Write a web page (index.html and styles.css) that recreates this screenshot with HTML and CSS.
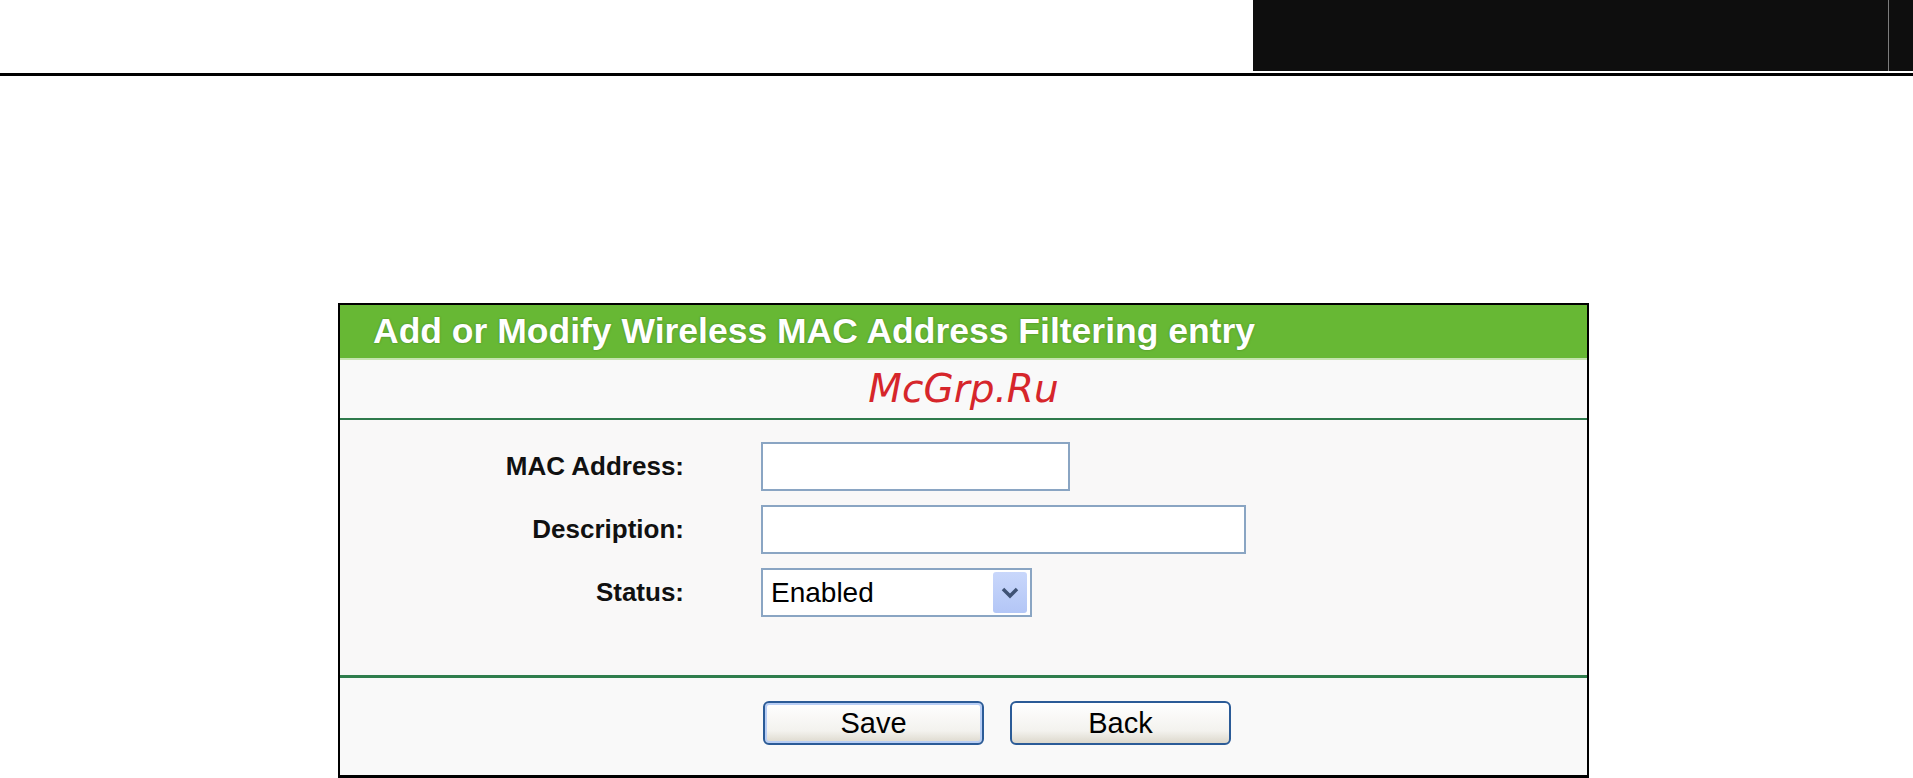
FILE: index.html
```html
<!DOCTYPE html>
<html lang="en">
<head>
  <meta charset="UTF-8" />
  <title>Wireless MAC Filtering</title>
  <link rel="stylesheet" href="styles.css">
</head>
<body>
  <div class="topbar">
    <div class="blackbox"><div class="blackbox-inner"></div></div>
  </div>
  <div class="rule"></div>

  <div class="panel">
    <div class="panel-title">Add or Modify Wireless MAC Address Filtering entry</div>
    <div class="brand">McGrp.Ru</div>

    <div class="form">
      <label class="form-label" for="mac">MAC Address:</label>
      <input class="field field-mac" type="text" id="mac" />

      <label class="form-label" for="desc">Description:</label>
      <input class="field field-desc" type="text" id="desc" />

      <label class="form-label">Status:</label>
      <div class="select">
        <span class="select-text">Enabled</span>
        <span class="select-arrow">
          <svg width="18" height="12" viewBox="0 0 18 12"><path d="M2 2 L9 9 L16 2" fill="none" stroke="#3f5275" stroke-width="3.5"/></svg>
        </span>
      </div>
    </div>

    <div class="actions">
      <button class="btn btn-default">Save</button>
      <button class="btn">Back</button>
    </div>
  </div>
</body>
</html>
```

FILE: styles.css
```css
body {
  margin: 0;
  background: #fff;
  font-family: "Liberation Sans", Arial, sans-serif;
}
.topbar {
  height: 71px;
  display: flex;
  justify-content: flex-end;
}
.blackbox {
  width: 660px;
  background: #0e0e0e;
}
.blackbox-inner {
  width: 635px;
  height: 100%;
  border-right: 1px solid #7c7c7c;
}
.rule {
  margin-top: 2px;
  height: 3px;
  background: #000;
}
.panel {
  box-sizing: border-box;
  width: 1251px;
  margin: 227px 0 0 338px;
  border: 2px solid #000;
  border-bottom-width: 3px;
  background: #f9f9f9;
}
.panel-title {
  height: 53px;
  line-height: 53px;
  padding-left: 33px;
  background: #67b834;
  border-bottom: 2px solid #c4e3ae;
  color: #fff;
  font-weight: bold;
  font-size: 35.5px;
  text-shadow: 0 0 2px rgba(40, 80, 20, 0.55);
}
.brand {
  height: 58px;
  line-height: 58px;
  text-align: center;
  font-family: "DejaVu Sans", sans-serif;
  font-style: italic;
  font-size: 39px;
  color: #d6262b;
  border-bottom: 2px solid #2e7a4c;
  box-shadow: 0 1px 0 #a8d2b2;
}
.form {
  display: grid;
  grid-template-columns: 344px auto;
  column-gap: 77px;
  align-items: center;
  justify-items: start;
  padding: 22px 0 58px;
  row-gap: 14px;
  background: #f9f8f8;
  border-bottom: 3px solid #2f7d4c;
}
.form-label {
  justify-self: end;
  font-weight: bold;
  font-size: 26px;
  color: #111;
}
.field {
  box-sizing: border-box;
  height: 49px;
  border: 2px solid #8aa5c3;
  background: #fff;
  padding: 0 8px;
  font-family: inherit;
  font-size: 28px;
}
.field-mac {
  width: 309px;
}
.field-desc {
  width: 485px;
}
.select {
  box-sizing: border-box;
  width: 271px;
  height: 49px;
  border: 2px solid #8aa5c3;
  background: #fff;
  display: flex;
  align-items: center;
  justify-content: space-between;
  padding: 2px 3px 2px 8px;
}
.select-text {
  font-size: 28px;
  color: #000;
}
.select-arrow {
  width: 34px;
  height: 41px;
  border-radius: 3px;
  background: linear-gradient(#c9d7fb, #b3c6f6);
  display: flex;
  align-items: center;
  justify-content: center;
}
.actions {
  display: flex;
  gap: 26px;
  padding: 23px 0 30px 423px;
}
.btn {
  width: 221px;
  height: 44px;
  border: 2px solid #2b5b97;
  border-radius: 6px;
  background: linear-gradient(#ffffff, #f3f2ee 70%, #dcd8cc);
  font-family: inherit;
  font-size: 29px;
  color: #000;
  padding: 0;
}
.btn-default {
  box-shadow: inset 0 0 0 2px #b8cef5;
}
```
